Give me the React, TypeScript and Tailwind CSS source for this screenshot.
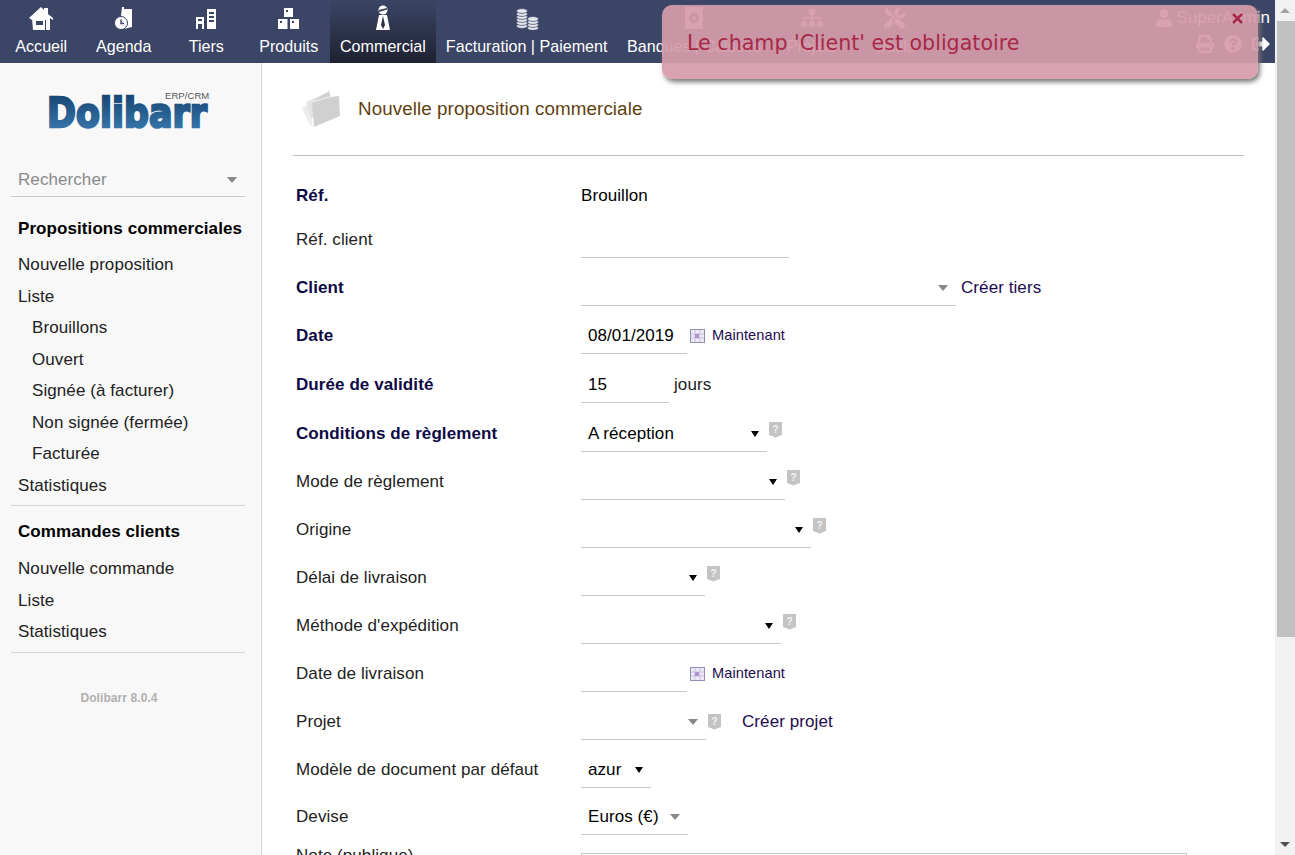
import React from 'react'
import { FaPrint, FaQuestionCircle, FaSignOutAlt, FaSitemap, FaTools, FaUser } from 'react-icons/fa'
import { X } from 'lucide-react'

const HomeIcon = () => (
  <svg width="24" height="24" viewBox="0 0 24 24" fill="#fff">
    <path d="M0 12 L12 1 L15 4 L15 2 L19 2 L19 8 L24 12 L24 14 L21 12 L21 24 L17 24 L17 14 L15 14 L15 13 L6 13 L5 12 L3 12 L3 14 Z" />
    <path fillRule="evenodd" d="M3 12 H16 V24 H4 Z M7 15 V19 H14 V15 Z" />
  </svg>
)

const AgendaIcon = () => (
  <svg width="24" height="24" viewBox="0 0 24 24" fill="#fff">
    <path d="M10 1 H12 V3 H20 V21 L12 23 L12 12 L9 10 Z" />
    <circle cx="9" cy="17" r="6.5" stroke="#3b4566" strokeWidth="1" />
    <path d="M9 13.5 V17.5 H12" fill="none" stroke="#3b4566" strokeWidth="1.4" />
  </svg>
)

const TiersIcon = () => (
  <svg width="24" height="24" viewBox="0 0 24 24" fill="#fff">
    <path fillRule="evenodd" d="M2 11 H10 V23 H8 V18 H4 V23 H2 Z M4 13 V15 H8 V13 Z" />
    <path fillRule="evenodd" d="M13 3 H22 V23 H13 Z M15 6 V8 H20 V6 Z M15 10 V12 H20 V10 Z M15 14 V16 H20 V14 Z" />
  </svg>
)

const ProductIcon = () => (
  <svg width="24" height="24" viewBox="0 0 24 24" fill="#fff">
    <path fillRule="evenodd" d="M7 2 H16 V11 H7 Z M9 4 V6 H11 V4 Z" />
    <path fillRule="evenodd" d="M1 13 H10.5 V23 H1 Z M3 15 V17 H5 V15 Z" />
    <path fillRule="evenodd" d="M13 13 H22 V23 H13 Z M15 15 V17 H17 V15 Z" />
  </svg>
)

const CommercialIcon = () => (
  <svg width="24" height="26" viewBox="0 0 24 26" fill="#fff">
    <circle cx="12" cy="5" r="4.5" />
    <path d="M8 5 L16 3 L16 4.5 L8 7 Z" fill="#33394f" />
    <path d="M8 10 H16 L19 25 H5 Z" />
    <path d="M12 11 L14 20 L12 24 L10 20 Z" fill="#2b3046" />
  </svg>
)

const CoinStack = ({ x, top, count }: { x: number; top: number; count: number }) => (
  <g>
    {Array.from({ length: count }).map((_, i) => (
      <ellipse key={i} cx={x} cy={top + (count - 1 - i) * 3} rx="5.5" ry="2.4" fill="#e4e6ec" stroke="#3b4566" strokeWidth="0.7" />
    ))}
  </g>
)

const CoinsIcon = () => (
  <svg width="24" height="24" viewBox="0 0 24 24">
    <CoinStack x={7} top={5} count={6} />
    <CoinStack x={18} top={13} count={4} />
  </svg>
)

const SafeIcon = () => (
  <svg width="20" height="24" viewBox="0 0 20 24">
    <path fillRule="evenodd" d="M1 1 H19 V23 H1 Z M10 7 A5 5 0 1 0 10 17 A5 5 0 1 0 10 7 Z" fill="#fff" />
    <circle cx="10" cy="12" r="2" fill="#fff" />
  </svg>
)

const MenuItem = ({ label, icon, active, wide }: { label: string; icon?: React.ReactNode; active?: boolean; wide?: boolean }) => (
  <div
    className={`flex h-[63px] flex-col items-center ${wide ? 'w-[153px]' : 'min-w-[82.5px]'} px-[10px] ${
      active ? 'bg-gradient-to-b from-[#3b4566] to-[#1e2231]' : ''
    }`}
  >
    <div className="flex h-[36px] items-center justify-center py-[2px]">{icon}</div>
    <span className="whitespace-nowrap text-[16.1px] leading-[20px] text-white">{label}</span>
  </div>
)

const SideLink = ({ label, sub }: { label: string; sub?: boolean }) => (
  <div className={`h-[31.5px] text-[17px] leading-[31.5px] text-[#222222] ${sub ? 'pl-[21px]' : 'pl-[7px]'}`}>{label}</div>
)

const Arrow = ({ grey }: { grey?: boolean }) =>
  grey ? (
    <span className="inline-block h-0 w-0 border-x-[5.5px] border-t-[6px] border-x-transparent border-t-[#888888]" />
  ) : (
    <span className="inline-block h-0 w-0 border-x-[4px] border-t-[6px] border-x-transparent border-t-black" />
  )

const HelpTag = ({ low }: { low?: boolean }) => (
  <svg width="13" height="16" viewBox="0 0 13 16" className={`ml-[2px] self-start ${low ? 'mt-[10px]' : 'mt-[6px]'}`}>
    <path d="M0 0 H13 V13 L6.5 15.5 L0 13 Z" fill="#c4c4c4" />
    <text x="6.5" y="10.5" textAnchor="middle" fontSize="10" fontWeight="bold" fill="#f2f2f2" fontFamily="Liberation Sans">?</text>
  </svg>
)

const CalendarIcon = () => (
  <svg width="15" height="14" viewBox="0 0 15 14" className="ml-[3px] mr-[7px]">
    <rect x="0.5" y="0.5" width="14" height="13" fill="#ece9f4" stroke="#8f8fb5" />
    <path d="M5 1 V13 M10 1 V13 M1 5 H14 M1 9 H14" stroke="#c9c6dc" />
    <rect x="5" y="5" width="4" height="4" fill="#b18fd0" />
  </svg>
)

const Field = ({ width, children, arrow, grey }: { width: string; children?: React.ReactNode; arrow?: boolean; grey?: boolean }) => (
  <div className={`flex h-[36px] items-center justify-between self-start border-b border-[#c8c8c8] pl-[7px] pr-[8px] text-[17px] text-black ${width}`}>
    <span>{children}</span>
    {arrow && <Arrow grey={grey} />}
  </div>
)

const Row = ({ label, bold, height, children }: { label: string; bold?: boolean; height: string; children?: React.ReactNode }) => (
  <div className={`flex items-start ${height}`}>
    <div className={`w-[288px] shrink-0 pl-[3px] text-[17px] leading-[36px] ${bold ? 'font-bold text-[#0d0a45]' : 'text-[#222222]'}`}>
      {label}
    </div>
    <div className="flex h-[36px] items-center text-[17px] text-[#222222]">{children}</div>
  </div>
)

const Link = ({ children, className }: { children: React.ReactNode; className?: string }) => (
  <span className={`text-[#1d0a4f] ${className ?? ''}`}>{children}</span>
)

export default function App() {
  return (
    <div className="relative flex h-[855px] w-[1295px] overflow-hidden bg-white font-['Liberation_Sans',Arial,sans-serif]">
      <div className="flex w-[1275px] flex-col">
        <header className="relative flex h-[63px] shrink-0 bg-[#3b4566]">
          <MenuItem label="Accueil" icon={<HomeIcon />} />
          <MenuItem label="Agenda" icon={<AgendaIcon />} />
          <MenuItem label="Tiers" icon={<TiersIcon />} />
          <MenuItem label="Produits" icon={<ProductIcon />} />
          <MenuItem label="Commercial" icon={<CommercialIcon />} active />
          <MenuItem label="Facturation | Paiement" icon={<CoinsIcon />} />
          <MenuItem label="Banques | Caisses" icon={<SafeIcon />} wide />
          <MenuItem label="Projets" icon={<FaSitemap size={22} color="#fff" />} />
          <MenuItem label="Outils" icon={<FaTools size={21} color="#fff" />} />
          <div className="ml-auto flex flex-col items-end pr-[5px] pt-[8px] text-white">
            <div className="flex h-[19px] items-center text-[17px]">
              <FaUser size={18} className="mr-[3px]" />
              SuperAdmin
            </div>
            <div className="mt-[8px] flex items-center gap-[10px]">
              <FaPrint size={18} />
              <FaQuestionCircle size={18} />
              <FaSignOutAlt size={18} />
            </div>
          </div>
        </header>

        <div className="flex min-h-0 flex-1">
          <aside className="h-full w-[262px] shrink-0 border-r border-[#d6d6d6] bg-[#f8f8f8] pl-[11px] pr-[16px] tracking-[0.08px]">
            <div className="relative h-[73px]">
              <svg width="180" height="60" viewBox="0 0 180 60" className="absolute left-[30px] top-[20px]">
                <defs>
                  <linearGradient id="logoFill" x1="0" y1="0" x2="0" y2="1">
                    <stop offset="0" stopColor="#123f6b" />
                    <stop offset="1" stopColor="#3d7fb5" />
                  </linearGradient>
                </defs>
                <text
                  x="6"
                  y="44"
                  textLength="160"
                  lengthAdjust="spacingAndGlyphs"
                  fontFamily="DejaVu Sans"
                  fontWeight="bold"
                  fontSize="41"
                  fill="url(#logoFill)"
                  stroke="url(#logoFill)"
                  strokeWidth="2.4"
                >
                  Dolibarr
                </text>
              </svg>
              <span className="absolute left-[154px] top-[27px] text-[9.5px] leading-[12px] text-[#555555]">ERP/CRM</span>
            </div>
            <div className="mt-[22px] flex h-[39px] items-center justify-between border-b border-[#c8c8c8] pl-[7px] pr-[8px] pt-[5px] text-[17px] text-[#8a8a8a]">
              <span>Rechercher</span>
              <Arrow grey />
            </div>
            <div className="h-[52px] pl-[7px] pt-[20px] text-[17px] font-bold leading-[24px] text-black">Propositions commerciales</div>
            <div className="border-b border-[#d6d6d6] pb-[4px]">
              <SideLink label="Nouvelle proposition" />
              <SideLink label="Liste" />
              <SideLink label="Brouillons" sub />
              <SideLink label="Ouvert" sub />
              <SideLink label="Signée (à facturer)" sub />
              <SideLink label="Non signée (fermée)" sub />
              <SideLink label="Facturée" sub />
              <SideLink label="Statistiques" />
            </div>
            <div className="h-[47px] pl-[7px] pt-[13px] text-[17px] font-bold leading-[26px] text-black">Commandes clients</div>
            <div className="border-b border-[#d6d6d6] pb-[4px]">
              <SideLink label="Nouvelle commande" />
              <SideLink label="Liste" />
              <SideLink label="Statistiques" />
            </div>
            <div className="pr-[18px] pt-[37px] text-center text-xs font-bold leading-[16px] text-[#b0b0b0]">Dolibarr 8.0.4</div>
          </aside>

          <main className="min-w-0 flex-1 overflow-hidden px-[31px] tracking-[0.08px]">
            <div className="mb-[22px] flex h-[93px] items-center border-b border-[#c0c0c0]">
              <svg width="40" height="40" viewBox="0 0 40 40" className="ml-[9px] mr-[16px]">
                <path d="M0 19 L7 34 L11 38 L6 16 Z" fill="#ececec" />
                <path d="M4 13 L24 4 L27 9 L9 31 L11 38 Z" fill="#e4e4e4" />
                <path d="M10 13 L27 2 L29 8 L37 7 L38 27 L12 38 Z" fill="#d0d0d0" />
                <path d="M10 13 L27 8 L29 8" fill="none" stroke="#f4f4f4" strokeWidth="1" />
              </svg>
              <h1 className="text-[18.8px] font-normal text-[#5f3f10]">Nouvelle proposition commerciale</h1>
            </div>

            <Row label="Réf." bold height="h-[44px]">
              <span className="text-black">Brouillon</span>
            </Row>
            <Row label="Réf. client" height="h-[48px]">
              <Field width="w-[208px]" />
            </Row>
            <Row label="Client" bold height="h-[48px]">
              <Field width="w-[375px]" arrow grey />
              <Link className="ml-[5px]">Créer tiers</Link>
            </Row>
            <Row label="Date" bold height="h-[49px]">
              <Field width="w-[106px]">08/01/2019</Field>
              <CalendarIcon />
              <Link className="text-[14.6px]">Maintenant</Link>
            </Row>
            <Row label="Durée de validité" bold height="h-[49px]">
              <Field width="w-[88px]">15</Field>
              <span className="ml-[5px]">jours</span>
            </Row>
            <Row label="Conditions de règlement" bold height="h-[48px]">
              <Field width="w-[186px]" arrow>A réception</Field>
              <HelpTag />
            </Row>
            <Row label="Mode de règlement" height="h-[48px]">
              <Field width="w-[204px]" arrow />
              <HelpTag />
            </Row>
            <Row label="Origine" height="h-[48px]">
              <Field width="w-[230px]" arrow />
              <HelpTag />
            </Row>
            <Row label="Délai de livraison" height="h-[48px]">
              <Field width="w-[124px]" arrow />
              <HelpTag />
            </Row>
            <Row label="Méthode d'expédition" height="h-[48px]">
              <Field width="w-[200px]" arrow />
              <HelpTag />
            </Row>
            <Row label="Date de livraison" height="h-[48px]">
              <Field width="w-[106px]" />
              <CalendarIcon />
              <Link className="text-[14.6px]">Maintenant</Link>
            </Row>
            <Row label="Projet" height="h-[48px]">
              <Field width="w-[125px]" arrow grey />
              <HelpTag low />
              <Link className="ml-[21px]">Créer projet</Link>
            </Row>
            <Row label="Modèle de document par défaut" height="h-[47px]">
              <Field width="w-[70px]" arrow>azur</Field>
            </Row>
            <Row label="Devise" height="h-[39px]">
              <Field width="w-[107px]" arrow grey>Euros (€)</Field>
            </Row>
            <Row label="Note (publique)" height="h-[46px]">
              <div className="mt-[15px] h-[40px] w-[606px] self-start border border-[#c8c8c8]" />
            </Row>
          </main>
        </div>
      </div>

      <div className="flex w-[20px] shrink-0 flex-col items-end bg-[#f1f1f1]">
        <div className="flex h-[21px] w-full items-center justify-center">
          <span className="h-0 w-0 border-x-[5px] border-b-[5px] border-x-transparent border-b-[#a3a3a3]" />
        </div>
        <div className="h-[616px] w-[18px] bg-[#c1c1c1]" />
        <div className="mt-auto flex h-[21px] w-full items-center justify-center">
          <span className="h-0 w-0 border-x-[5px] border-t-[5px] border-x-transparent border-t-[#505050]" />
        </div>
      </div>

      <div className="absolute left-[662px] top-[5px] h-[74px] w-[596px] rounded-[10px] bg-[#d59baa]/93 pl-[25px] pt-[25px] font-['DejaVu_Sans',sans-serif] text-[20.6px] leading-[26px] text-[#a72947] shadow-[2px_3px_5px_#777777]">
        Le champ 'Client' est obligatoire
        <X size={15} strokeWidth={4} color="#a72947" className="absolute right-[13px] top-[6px]" />
      </div>
    </div>
  )
}
